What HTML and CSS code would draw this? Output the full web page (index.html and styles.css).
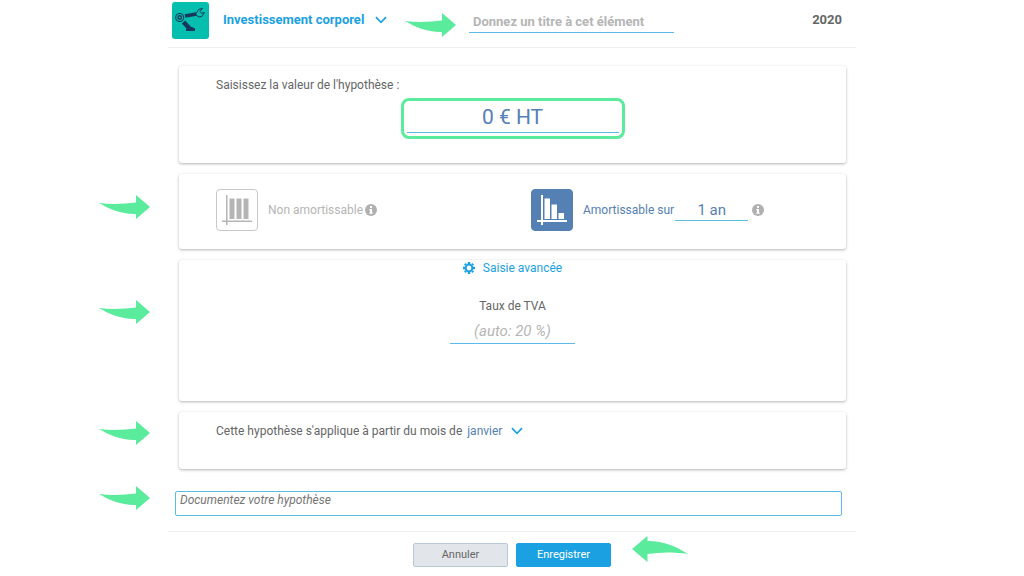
FILE: index.html
```html
<!DOCTYPE html>
<html lang="fr">
<head>
    <meta charset="UTF-8">
    <meta name="viewport" content="width=device-width, initial-scale=1.0">
    <title>Investissement corporel</title>
    <link rel="stylesheet" href="styles.css">
</head>
<body>
    <!-- shared shapes -->
    <svg class="sprite" aria-hidden="true">
        <symbol id="arrow" viewBox="0 0 51 24">
            <path d="M0 8C12 9.500 25 9 37 7.500V0L51 12L37 24V19C23 19.500 10 14 0 8Z"/>
        </symbol>
        <symbol id="chevron" viewBox="0 0 12 8">
            <path d="M1 1.200L6 6.300L11 1.200" fill="none" stroke="currentColor" stroke-width="1.700"/>
        </symbol>
        <symbol id="info" viewBox="0 0 12 12">
            <circle cx="6" cy="6" r="6" fill="currentColor"/>
            <path d="M5 2H7V4H5ZM4.300 5H7V8.500H7.800V9.800H4.300V8.500H5V6.200H4.300Z" fill="#fff"/>
        </symbol>
    </svg>

    <form class="dialog">
        <header class="header">
            <svg class="logo" viewBox="0 0 37 37" aria-hidden="true">
                <rect width="37" height="37" rx="3" fill="#04bfad"/>
                <g stroke="#17375e" fill="none">
                    <circle cx="7.700" cy="15.500" r="4" stroke-width="1.100"/>
                    <circle cx="7.700" cy="15.500" r="1.700" stroke-width="1.400"/>
                    <path d="M13 14L24.500 12" stroke-width="3.800"/>
                    <path d="M11.500 20L18 27" stroke-width="4.500"/>
                    <path d="M24.500 11L26.500 7.500L30.500 6.300M24.500 13.500L27 15L30 14.300L32.500 10.500L29.500 11.300L28 9.500L30.500 6.300" stroke-width="1"/>
                </g>
                <path d="M14 29V27L17 25H20L23 26.500V29Z" fill="#17375e"/>
            </svg>
            <div class="select kind">
                <select aria-label="Type d'investissement">
                    <option>Investissement corporel</option>
                </select>
                <svg class="chevron"><use href="#chevron"/></svg>
            </div>
            <svg class="arrow"><use href="#arrow"/></svg>
            <input class="field title" type="text" placeholder="Donnez un titre à cet élément" aria-label="Titre">
            <span class="year">2020</span>
        </header>

        <main class="content">
            <section class="card value-card">
                <label for="value">Saisissez la valeur de l'hypothèse :</label>
                <div class="highlight">
                    <input class="field value" id="value" type="text" value="0 € HT">
                </div>
            </section>

            <section class="card choices">
                <svg class="arrow side"><use href="#arrow"/></svg>
                <div class="choice">
                    <span class="tile">
                        <input type="radio" name="mode" id="fixed">
                        <svg viewBox="0 0 42 42" fill="currentColor">
                            <path d="M10 6H11.500V36H10ZM6 31.500H36V33H6Z"/>
                            <path d="M13.500 9.500H18.500V30H13.500ZM20.500 9.500H25.500V30H20.500ZM27.500 9.500H32.500V30H27.500Z"/>
                        </svg>
                    </span>
                    <label for="fixed">Non amortissable</label>
                    <svg class="info"><use href="#info"/></svg>
                </div>
                <div class="choice active">
                    <span class="tile">
                        <input type="radio" name="mode" id="spread" checked>
                        <svg viewBox="0 0 42 42" fill="currentColor">
                            <path d="M10 6H12V36H10ZM6 31H36V33H6Z"/>
                            <path d="M13.500 9.500H19V30H13.500ZM20.500 15.500H26V30H20.500ZM27.500 24H33V30H27.500Z"/>
                        </svg>
                    </span>
                    <label for="spread">Amortissable sur</label>
                    <input class="field duration" type="text" value="1 an" aria-label="Durée">
                    <svg class="info"><use href="#info"/></svg>
                </div>
            </section>

            <section class="card advanced">
                <svg class="arrow side"><use href="#arrow"/></svg>
                <button class="toggle" type="button">
                    <svg class="gear" viewBox="0 0 12 12">
                        <circle cx="6" cy="6" r="3.400" fill="none" stroke="currentColor" stroke-width="2"/>
                        <path d="M6 0V2M6 10V12M0 6H2M10 6H12M1.800 1.800L3 3M9 9L10.200 10.200M1.800 10.200L3 9M9 3L10.200 1.800" stroke="currentColor" stroke-width="2.400"/>
                    </svg>
                    Saisie avancée
                </button>
                <label for="vat">Taux de TVA</label>
                <input class="field vat" id="vat" type="text" placeholder="(auto: 20 %)">
            </section>

            <section class="card month-card">
                <svg class="arrow side"><use href="#arrow"/></svg>
                <label for="month">Cette hypothèse s'applique à partir du mois de</label>
                <div class="select month">
                    <select id="month">
                        <option>janvier</option>
                    </select>
                    <svg class="chevron"><use href="#chevron"/></svg>
                </div>
            </section>
        </main>

        <div class="notes">
            <svg class="arrow side"><use href="#arrow"/></svg>
            <textarea placeholder="Documentez votre hypothèse" aria-label="Documentation"></textarea>
        </div>

        <footer class="footer">
            <button class="btn" type="button">Annuler</button>
            <button class="btn primary" type="submit">Enregistrer</button>
            <svg class="arrow back" viewBox="0 0 56 26">
                <path d="M0 13L15.500 0V5C29 4.500 43 9.500 56 18C42 16 29 16 15.500 18V26Z"/>
            </svg>
        </footer>
    </form>
</body>
</html>
```
FILE: styles.css
```css
* {
    box-sizing: border-box;
}
body {
    margin: 0;
    background: #fff;
    color: #666;
    font-family: Roboto, sans-serif;
    font-size: 12px;
    line-height: 16px;
}
input, select, textarea, button {
    font: inherit;
    color: inherit;
    margin: 0;
}
svg {
    flex: none;
}
.sprite {
    display: none;
}
.dialog {
    max-width: 688px;
    margin: 0 auto;
}

/* header */
.header {
    display: flex;
    align-items: flex-start;
    height: 48px;
    padding: 2px 14px 0 4px;
    border-bottom: 1px solid #eee;
}
.logo {
    width: 37px;
    height: 37px;
}
.select {
    display: flex;
    align-items: center;
}
.select select {
    appearance: none;
    border: 0;
    padding: 0;
    background: none;
}
.chevron {
    width: 12px;
    height: 8px;
    margin-left: 8px;
    color: #1ba1e2;
    pointer-events: none;
}
.kind {
    margin: 10px 0 0 14px;
    color: #1ba1e2;
    font-size: 13px;
    font-weight: bold;
}
.kind .chevron {
    margin-left: 10px;
}
.header .arrow {
    margin: 11px 13px 0 18px;
}
.field {
    border: 0;
    border-bottom: 1px solid #5bbce8;
    border-radius: 0;
    padding: 0;
    background: none;
    color: #5580b4;
    text-align: center;
    outline: none;
}
.field::placeholder {
    color: #b5b5b5;
    opacity: 1;
}
.title {
    width: 205px;
    height: 23px;
    margin-top: 8px;
    padding-left: 4px;
    text-align: left;
    font-size: 13px;
    font-weight: bold;
}
.year {
    margin: 10px 0 0 auto;
    font-size: 13px;
    font-weight: bold;
}

/* pointers */
.arrow {
    width: 51px;
    height: 24px;
    fill: #5beb9c;
}
.side {
    position: absolute;
    left: -80px;
}

/* cards */
.content {
    display: flex;
    flex-direction: column;
    gap: 11px;
    padding: 18px 10px 0 11px;
}
.card {
    position: relative;
    border-radius: 3px;
    box-shadow: 0 1px 3px rgba(0, 0, 0, 0.3);
}
.value-card {
    padding: 11px 37px 24px;
}
.highlight {
    width: 224px;
    margin: 5px auto 0;
    padding: 0 3px 3px;
    border: 3px solid #5beb9c;
    border-radius: 8px;
}
.value {
    display: block;
    width: 100%;
    height: 32px;
    font-size: 21px;
}
.choices {
    display: grid;
    grid-template-columns: 315px 1fr;
    padding: 15px 37px 18px;
}
.choices .side {
    top: 21px;
}
.choice {
    display: flex;
    align-items: center;
    color: #b5b5b5;
}
.tile {
    display: grid;
    width: 42px;
    height: 42px;
    margin-right: 10px;
}
.tile input, .tile svg {
    grid-area: 1 / 1;
    width: 42px;
    height: 42px;
}
.tile svg {
    pointer-events: none;
}
.tile input {
    appearance: none;
    border: 1px solid #c8c8c8;
    border-radius: 4px;
}
.tile input:checked {
    border-color: #5580b4;
    background: #5580b4;
}
.active label {
    color: #5580b4;
}
.active .tile {
    color: #fff;
}
.info {
    width: 12px;
    height: 12px;
    margin-left: 2px;
    color: #b0b0b0;
}
.duration {
    width: 73px;
    height: 21px;
    margin: 0 2px 0 1px;
    font-size: 15px;
}
.advanced {
    display: flex;
    flex-direction: column;
    align-items: center;
    padding-bottom: 57px;
}
.advanced .side {
    top: 40px;
}
.toggle {
    display: flex;
    align-items: center;
    gap: 8px;
    margin-bottom: 22px;
    border: 0;
    padding: 0;
    background: none;
    color: #1ba1e2;
}
.gear {
    width: 12px;
    height: 12px;
}
.vat {
    width: 125px;
    height: 25px;
    margin-top: 5px;
    font-size: 15px;
}
.vat::placeholder {
    font-style: italic;
}
.month-card {
    display: flex;
    gap: 5px;
    padding: 11px 37px 30px;
}
.month-card .side {
    top: 9px;
}
.month {
    color: #5580b4;
}

/* notes and actions */
.notes {
    position: relative;
    margin: 22px 14px 0 7px;
}
.notes .side {
    top: -5px;
    left: -76px;
}
.notes textarea {
    display: block;
    width: 100%;
    height: 25px;
    border: 1px solid #5bbce8;
    border-radius: 2px;
    padding: 0 4px;
    resize: none;
    overflow: hidden;
    outline: none;
}
.notes textarea::placeholder {
    color: #757575;
    font-style: italic;
}
.footer {
    position: relative;
    display: flex;
    justify-content: center;
    gap: 8px;
    margin-top: 15px;
    padding-top: 11px;
    border-top: 1px solid #eee;
}
.btn {
    width: 95px;
    height: 24px;
    border: 1px solid #b8c9dc;
    border-radius: 2px;
    padding: 0;
    background: #e2e6eb;
    font-size: 11px;
}
.primary {
    border-color: #1ba1e2;
    background: #1ba1e2;
    color: #fff;
}
.back {
    position: absolute;
    top: 4px;
    left: calc(50% + 120px);
    width: 56px;
    height: 26px;
}
```
